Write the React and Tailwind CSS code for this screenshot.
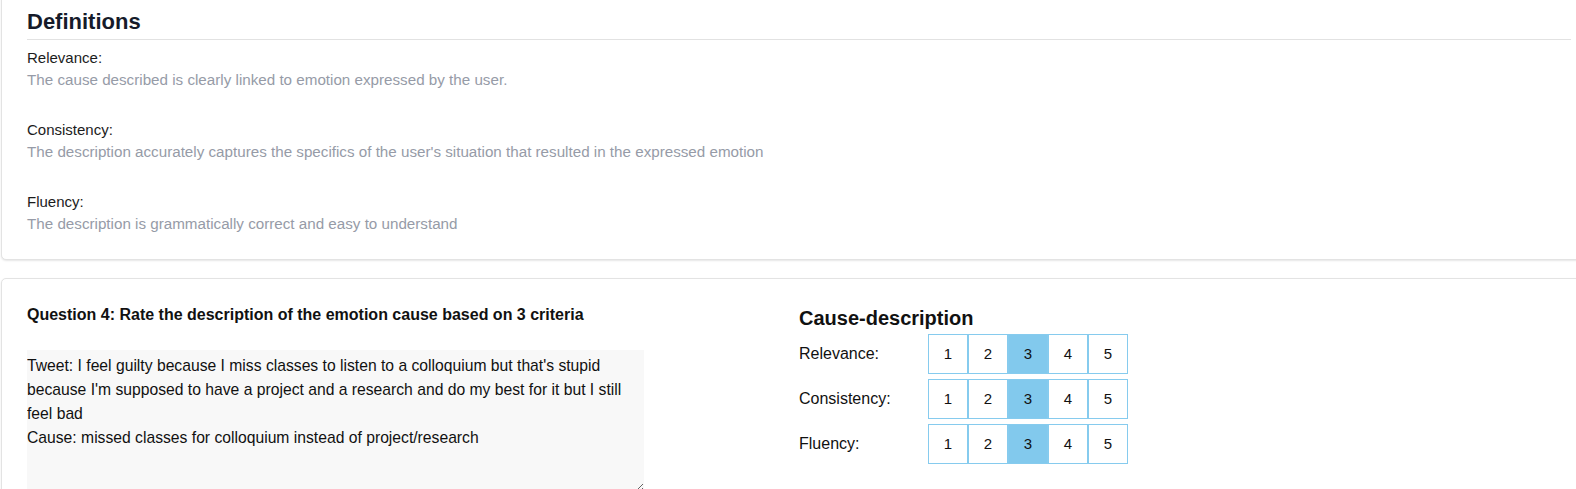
import { useState } from "react";

const DEFINITIONS = [
  {
    label: "Relevance:",
    text: "The cause described is clearly linked to emotion expressed by the user.",
  },
  {
    label: "Consistency:",
    text: "The description accurately captures the specifics of the user's situation that resulted in the expressed emotion",
  },
  {
    label: "Fluency:",
    text: "The description is grammatically correct and easy to understand",
  },
];

const CRITERIA = ["Relevance:", "Consistency:", "Fluency:"];

const TWEET =
  "Tweet: I feel guilty because I miss classes to listen to a colloquium but that's stupid because I'm supposed to have a project and a research and do my best for it but I still feel bad\nCause: missed classes for colloquium instead of project/research";

function ScaleRow({ label, value, onPick }) {
  return (
    <div className="flex items-center h-[40px]">
      <div className="w-[129px] text-[16px] text-[#111]">{label}</div>
      <div className="flex">
        {[1, 2, 3, 4, 5].map((n) => (
          <button
            key={n}
            onClick={() => onPick(n)}
            className={`w-[40px] h-[40px] border border-[#86cbee] text-[15px] text-[#111] flex items-center justify-center ${
              value === n ? "bg-[#82c9ed]" : "bg-white"
            }`}
          >
            {n}
          </button>
        ))}
      </div>
    </div>
  );
}

export default function App() {
  const [scores, setScores] = useState({ 0: 3, 1: 3, 2: 3 });

  return (
    <div className="w-full h-[489px] overflow-hidden bg-white font-['Liberation_Sans',Arial,sans-serif]">
      <div className="w-[1596px] ml-px">
        {/* definitions card */}
        <div className="-mt-[10px] pt-[18px] pb-[14px] px-[25px] bg-white border border-[#e3e3e3] rounded-[5px] shadow-[0_1px_2px_rgba(0,0,0,0.10)]">
          <h2 className="text-[22px] leading-[26px] font-bold text-[#161b2a] pb-[4px] border-b border-[#e2e2e2]">
            Definitions
          </h2>
          <div className="mt-[7px]">
            {DEFINITIONS.map((d) => (
              <div key={d.label} className="mb-[28px] last:mb-[10px]">
                <p className="text-[15px] leading-[22px] text-[#1c1c1c]">{d.label}</p>
                <p className="text-[15.2px] leading-[22px] text-[#969ba7]">{d.text}</p>
              </div>
            ))}
          </div>
        </div>

        {/* question card */}
        <div className="mt-[18px] pt-[26px] px-[25px] h-[260px] bg-white border border-[#e3e3e3] rounded-[5px] shadow-[0_1px_2px_rgba(0,0,0,0.10)]">
          <div className="flex">
            <div className="w-[772px]">
              <h3 className="text-[16px] leading-[20px] font-bold text-[#111]">
                Question 4: Rate the description of the emotion cause based on 3 criteria
              </h3>
              <textarea
                readOnly
                value={TWEET}
                className="mt-[25px] w-[617px] h-[142px] bg-[#f8f8f8] text-[15.7px] leading-[24px] text-[#111] outline-none resize-y px-0 pb-0 pt-[4px]"
              />
            </div>
            <div className="flex-1 pt-[1px]">
              <h3 className="text-[20px] leading-[24px] font-bold text-[#111] mb-[4px]">
                Cause-description
              </h3>
              <div className="flex flex-col gap-[5px]">
                {CRITERIA.map((c, i) => (
                  <ScaleRow
                    key={c}
                    label={c}
                    value={scores[i]}
                    onPick={(n) => setScores({ ...scores, [i]: n })}
                  />
                ))}
              </div>
            </div>
          </div>
        </div>
      </div>
    </div>
  );
}
